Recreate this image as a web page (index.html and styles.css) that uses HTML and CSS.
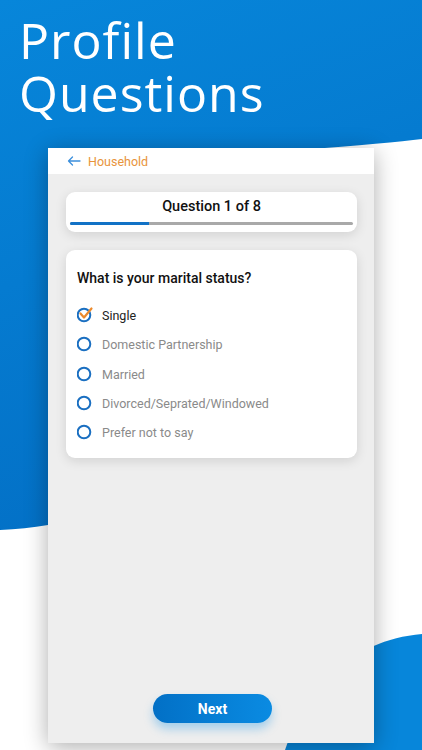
FILE: index.html
```html
<!DOCTYPE html>
<html lang="en">
<head>
<meta charset="utf-8">
<title>Profile Questions</title>
<link rel="stylesheet" href="styles.css">
</head>
<body>
<div class="screen">
  <svg class="bg" width="422" height="750" viewBox="0 0 422 750" aria-hidden="true">
    <defs>
      <linearGradient id="bgBlue" x1="0" y1="0" x2="0.3" y2="1">
        <stop offset="0" stop-color="#0786da"/>
        <stop offset="1" stop-color="#0370c6"/>
      </linearGradient>
    </defs>
    <path d="M0 0 H422 V139 Q390 143 300 150 L48 160 V525 Q25 529 0 530 Z" fill="url(#bgBlue)"/>
    <path d="M285 750 C305 690 350 640 422 634 V750 Z" fill="#0786da"/>
  </svg>
  <h1 class="title"><span class="title-line">Profile</span><span class="title-line">Questions</span></h1>
  <div class="phone">
    <div class="phone-header">
      <svg class="back" width="14" height="10" viewBox="0 0 14 10"><path d="M13 5 H1.5 M5.5 1 L1.5 5 L5.5 9" fill="none" stroke="#3b8fdc" stroke-width="1.3" stroke-linecap="round" stroke-linejoin="round"/></svg>
      <span class="crumb">Household</span>
    </div>
    <div class="phone-body">
      <div class="card progress-card">
        <div class="progress-title">Question 1 of 8</div>
        <div class="progress-track"><div class="progress-fill" style="width:28%"></div></div>
      </div>
      <div class="card question-card">
        <div class="question">What is your marital status?</div>
        <ul class="options">
          <li class="option selected">
            <svg class="radio" width="20" height="18" viewBox="0 0 20 18"><circle cx="7" cy="10" r="6.3" fill="none" stroke="#1a6fc1" stroke-width="2"/><path d="M3.5 8.5 L7 12.5 L14.5 3.5" fill="none" stroke="#ec8a2c" stroke-width="2.2" stroke-linecap="round" stroke-linejoin="round"/></svg>
            <span>Single</span>
          </li>
          <li class="option">
            <svg class="radio" width="20" height="18" viewBox="0 0 20 18"><circle cx="7" cy="10" r="6.3" fill="none" stroke="#1a6fc1" stroke-width="2"/></svg>
            <span>Domestic Partnership</span>
          </li>
          <li class="option">
            <svg class="radio" width="20" height="18" viewBox="0 0 20 18"><circle cx="7" cy="10" r="6.3" fill="none" stroke="#1a6fc1" stroke-width="2"/></svg>
            <span>Married</span>
          </li>
          <li class="option">
            <svg class="radio" width="20" height="18" viewBox="0 0 20 18"><circle cx="7" cy="10" r="6.3" fill="none" stroke="#1a6fc1" stroke-width="2"/></svg>
            <span>Divorced/Seprated/Windowed</span>
          </li>
          <li class="option">
            <svg class="radio" width="20" height="18" viewBox="0 0 20 18"><circle cx="7" cy="10" r="6.3" fill="none" stroke="#1a6fc1" stroke-width="2"/></svg>
            <span>Prefer not to say</span>
          </li>
        </ul>
      </div>
      <div class="spacer"></div>
      <button class="next">Next</button>
    </div>
  </div>
</div>
</body>
</html>
```
FILE: styles.css
```css
html, body {
  margin: 0;
  padding: 0;
  background: #ffffff;
}
.screen {
  position: relative;
  width: 422px;
  height: 750px;
  overflow: hidden;
  background: #ffffff;
  display: flex;
  flex-direction: column;
}
.bg {
  position: absolute;
  left: 0;
  top: 0;
  z-index: 0;
}
.title {
  position: relative;
  z-index: 1;
  margin: 0;
  padding: 14px 0 0 19px;
  height: 148px;
  box-sizing: border-box;
  font-family: "Open Sans", sans-serif;
  font-weight: 400;
  font-size: 50px;
  letter-spacing: 1px;
  color: #ffffff;
}
.title-line {
  display: block;
  height: 53px;
  line-height: 53px;
}
.phone {
  position: relative;
  z-index: 1;
  margin-left: 48px;
  width: 326px;
  height: 595px;
  background: #eeeeee;
  box-shadow: 0 4px 22px rgba(0, 0, 0, 0.32);
  display: flex;
  flex-direction: column;
  font-family: Roboto, "Liberation Sans", sans-serif;
}
.phone-header {
  height: 26px;
  background: #ffffff;
  display: flex;
  align-items: center;
  padding-left: 19px;
  gap: 7px;
}
.back {
  display: block;
}
.crumb {
  color: #e8943c;
  font-size: 12.5px;
}
.phone-body {
  flex: 1;
  display: flex;
  flex-direction: column;
  padding: 18px 17px 20px 18px;
}
.card {
  background: #ffffff;
  border-radius: 9px;
  box-shadow: 0 3px 12px rgba(0, 0, 0, 0.12);
}
.progress-card {
  height: 40px;
  box-sizing: border-box;
  padding: 6px 4px 0 4px;
  display: flex;
  flex-direction: column;
}
.progress-title {
  text-align: center;
  font-size: 14.5px;
  font-weight: 500;
  color: #111111;
  line-height: 17px;
}
.progress-track {
  margin-top: 7px;
  height: 3px;
  border-radius: 2px;
  background: #a9a9a9;
  overflow: hidden;
}
.progress-fill {
  height: 100%;
  background: #1272c6;
}
.question-card {
  margin-top: 18px;
  height: 208px;
  box-sizing: border-box;
  padding: 19px 11px 0 11px;
}
.question {
  font-size: 14px;
  font-weight: 500;
  color: #111111;
  line-height: 18px;
}
.options {
  list-style: none;
  margin: 14px 0 0 0;
  padding: 0;
}
.option {
  height: 29.3px;
  display: flex;
  align-items: center;
  gap: 5px;
  font-size: 12.5px;
  color: #8a8a8a;
}
.option .radio {
  display: block;
  margin-top: -3px;
}
.option.selected {
  color: #222222;
}
.spacer {
  flex: 1;
}
.next {
  align-self: center;
  margin-left: 2px;
  width: 119px;
  height: 29px;
  border: 0;
  border-radius: 15px;
  background: linear-gradient(90deg, #0270c6, #0a8be2);
  box-shadow: 0 6px 10px rgba(30, 150, 230, 0.35);
  color: #ffffff;
  font-family: Roboto, "Liberation Sans", sans-serif;
  font-weight: 700;
  font-size: 14px;
}
```
